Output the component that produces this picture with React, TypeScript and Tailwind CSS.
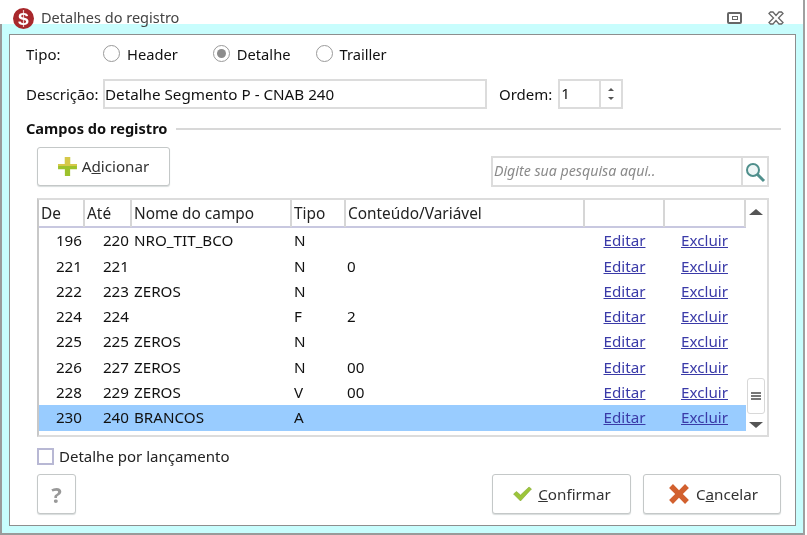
const rows = [
  { de: "196", ate: "220", nome: "NRO_TIT_BCO", tipo: "N", valor: "" },
  { de: "221", ate: "221", nome: "", tipo: "N", valor: "0" },
  { de: "222", ate: "223", nome: "ZEROS", tipo: "N", valor: "" },
  { de: "224", ate: "224", nome: "", tipo: "F", valor: "2" },
  { de: "225", ate: "225", nome: "ZEROS", tipo: "N", valor: "" },
  { de: "226", ate: "227", nome: "ZEROS", tipo: "N", valor: "00" },
  { de: "228", ate: "229", nome: "ZEROS", tipo: "V", valor: "00" },
  { de: "230", ate: "240", nome: "BRANCOS", tipo: "A", valor: "" },
];

const columns = "grid grid-cols-[46px_47px_160px_54px_239px_80px_81px]";

function Radio({ label, checked, className }: { label: string; checked?: boolean; className?: string }) {
  return (
    <label className={`flex items-center gap-[7px] text-[14.7px] ${className ?? ""}`}>
      <span className="flex h-[17px] w-[17px] items-center justify-center rounded-full border border-[#9a9a9a] bg-white">
        {checked && <span className="h-[9px] w-[9px] rounded-full bg-[#8c8c8c]" />}
      </span>
      {label}
    </label>
  );
}

function Button({ children, className }: { children: React.ReactNode; className: string }) {
  return (
    <button className={`flex items-center justify-center rounded-[3px] border border-[#c4c8c8] bg-white text-[15.2px] text-[#333] shadow-[0_1px_1px_#d8dcdc] ${className}`}>
      {children}
    </button>
  );
}

export default function App() {
  return (
    <div className="h-[535px] w-[807px] overflow-hidden bg-white pr-[2px]">
      <div className="flex h-[535px] w-[805px] flex-col overflow-hidden border-r-2 border-[#a0a0a0] bg-white font-['Noto_Sans','Open_Sans',sans-serif] text-[15px] text-[#111] blur-[0.4px]">
        <div className="relative z-10 -mb-[12px] flex h-[36px] shrink-0 items-center pl-[13px] pr-[19px]">
          <svg width="21" height="21" viewBox="0 0 21 21">
            <circle cx="10.5" cy="10.5" r="10.5" fill="#a8282c" />
            <path d="M10.500 2v17" stroke="#e8c4c4" strokeWidth="1.2" />
            <text x="10.5" y="16.500" textAnchor="middle" fontSize="17" fontWeight="700" fill="#fff" fontFamily="Liberation Sans">S</text>
          </svg>
          <span className="ml-[7px] text-[14.5px] text-[#444]">Detalhes do registro</span>
          <div className="ml-auto flex items-center gap-[26px]">
            <span className="flex h-[12px] w-[15px] items-center justify-center rounded-[2px] border-2 border-[#666]">
              <span className="h-[4px] w-[6px] border border-[#666]" />
            </span>
            <svg width="16" height="14" viewBox="0 0 16 14" fill="#fff" stroke="#666" strokeWidth="1.3">
              <path d="M1 2.500 2.500 1H5l3 3.500L11 1h2.500L15 2.500 10.500 7 15 11.500 13.500 13H11L8 9.500 5 13H2.500L1 11.500 5.500 7Z" />
            </svg>
          </div>
        </div>

        <div className="flex flex-1 flex-col border-b-2 border-l-2 border-[#9a9a9a] bg-[#c8fdfd] pb-[6px] pl-[7px] pr-[7px] pt-[10px]">
          <div className="flex h-[492px] flex-col border border-[#8e8e8e] bg-white pl-[16px] pr-[14px]">
            <div className="mt-[5px] flex h-[28px] items-center">
              <span className="w-[77px]">Tipo:</span>
              <div className="flex">
                <Radio label="Header" />
                <Radio label="Detalhe" checked className="ml-[35px]" />
                <Radio label="Trailler" className="ml-[25px]" />
              </div>
            </div>

            <div className="mt-[11px] flex h-[30px] items-center">
              <span className="w-[77px]">Descrição:</span>
              <div className="flex h-full w-[384px] items-center border-2 border-[#dcdcdc] text-[15.2px]">
                Detalhe Segmento P - CNAB 240
              </div>
              <span className="ml-[12px]">Ordem:</span>
              <div className="ml-[6px] flex h-full w-[65px] border-2 border-[#dcdcdc]">
                <span className="flex-1 pl-[1px] leading-[24px]">1</span>
                <span className="flex w-[22px] flex-col items-center justify-center gap-[6px] border-l-2 border-[#dcdcdc]">
                  <span className="border-x-[3px] border-b-[3px] border-x-transparent border-b-[#555]" />
                  <span className="border-x-[3px] border-t-[3px] border-x-transparent border-t-[#555]" />
                </span>
              </div>
            </div>

            <div className="mt-[9px] flex h-[22px] items-center gap-[8px]">
              <span className="text-[14.6px] font-bold text-[#111]">Campos do registro</span>
              <span className="h-[2px] flex-1 bg-[#d8d8d8]" />
            </div>

            <div className="mt-[7px] flex w-[743px] items-start justify-between pl-[11px]">
              <Button className="h-[39px] w-[133px] gap-[4px] pr-[1px]">
                <svg width="21" height="21" viewBox="0 0 20 20">
                  <path d="M7.500 1h5v6.500H19v5h-6.500V19h-5v-6.500H1v-5h6.500Z" fill="#9dc22c" />
                  <path d="M7.500 1h5v6.500H7.500ZM1 7.500h18v2H1Z" fill="#d6c84a" />
                </svg>
                <span>A<span className="underline">d</span>icionar</span>
              </Button>
              <div className="mt-[9px] flex h-[31px] w-[278px] border-2 border-[#dcdcdc]">
                <span className="flex-1 pl-[1px] text-[14.2px] italic leading-[26px] text-[#8a8a8a]">Digite sua pesquisa aqui..</span>
                <span className="flex w-[26px] items-center justify-center border-l-2 border-[#dcdcdc]">
                  <svg width="22" height="22" viewBox="0 0 22 22" fill="none" stroke="#4f8f8c">
                    <circle cx="9" cy="9" r="6" strokeWidth="2" fill="#eef6f6" />
                    <path d="M13.500 13.500 20 20" strokeWidth="3" />
                  </svg>
                </span>
              </div>
            </div>

            <div className="ml-[11px] mt-[11px] flex h-[239px] w-[732px] border-2 border-[#dcdcdc] border-l-[#c8c8c8]">
              <div className="w-[707px] text-[15.2px]">
                <div className={`${columns} h-[28px] border-b-2 border-[#c8c8e0] text-[15.4px] leading-[27px] text-[#222]`}>
                  {["De", "Até", "Nome do campo", "Tipo", "Conteúdo/Variável", "", ""].map((title, i) => (
                    <span key={i} className="border-r-2 border-[#d6d6d6] pl-[2px]">{title}</span>
                  ))}
                </div>
                <div className="pt-[0.3px]">
                  {rows.map((row) => (
                    <div key={row.de} className={`${columns} h-[25.3px] leading-[25px] ${row.de === "230" ? "bg-[#99ccff]" : ""}`}>
                      <span className="pr-[3px] text-right">{row.de}</span>
                      <span className="pr-[3px] text-right">{row.ate}</span>
                      <span className="pl-[2px]">{row.nome}</span>
                      <span className="pl-[2px]">{row.tipo}</span>
                      <span className="pl-[1px]">{row.valor}</span>
                      <a className="pr-[1px] text-center text-[#3a3aa8] underline">Editar</a>
                      <a className="pr-[2px] text-center text-[#3a3aa8] underline">Excluir</a>
                    </div>
                  ))}
                </div>
              </div>
              <div className="flex flex-1 flex-col items-center pb-[7px] pr-[2px] pt-[9px]">
                <span className="border-x-[7px] border-b-[6px] border-x-transparent border-b-[#555]" />
                <span className="mt-auto flex h-[36px] w-[18px] items-center justify-center rounded-[3px] border border-[#d8d8d8] text-[#666]">
                  <span className="h-[8px] w-[10px] border-y-2 border-[#777] bg-[linear-gradient(#fff_25%,#777_25%,#777_75%,#fff_75%)]" />
                </span>
                <span className="mt-[8px] border-x-[7px] border-t-[6px] border-x-transparent border-t-[#555]" />
              </div>
            </div>

            <label className="ml-[11px] mt-[9px] flex h-[20px] items-center gap-[5px] text-[#222]">
              <span className="h-[17px] w-[17px] border-2 border-[#b8b8d4] bg-white" />
              Detalhe por lançamento
            </label>

            <div className="mt-[8px] flex items-start pl-[11px]">
              <Button className="h-[40px] w-[39px] !text-[22px] font-bold !text-[#999]">?</Button>
              <Button className="ml-auto h-[40px] w-[139px] gap-[5px]">
                <svg width="21" height="18" viewBox="0 0 20 18">
                  <path d="M1 9 4 6.500 8 10 16.500 2 19 4 8 16Z" fill="#9cc53a" stroke="#7ba02a" strokeWidth="0.5" />
                </svg>
                <span><span className="underline">C</span>onfirmar</span>
              </Button>
              <Button className="ml-[12px] h-[40px] w-[138px] gap-[6px] pl-[2px]">
                <svg width="22" height="22" viewBox="0 0 20 20">
                  <path d="M1 4.500 4.500 1 10 6.500 15.500 1 19 4.500 13.500 10 19 15.500 15.500 19 10 13.500 4.500 19 1 15.500 6.500 10Z" fill="#d2602e" />
                </svg>
                <span>C<span className="underline">a</span>ncelar</span>
              </Button>
            </div>
          </div>
        </div>
      </div>
    </div>
  );
}
